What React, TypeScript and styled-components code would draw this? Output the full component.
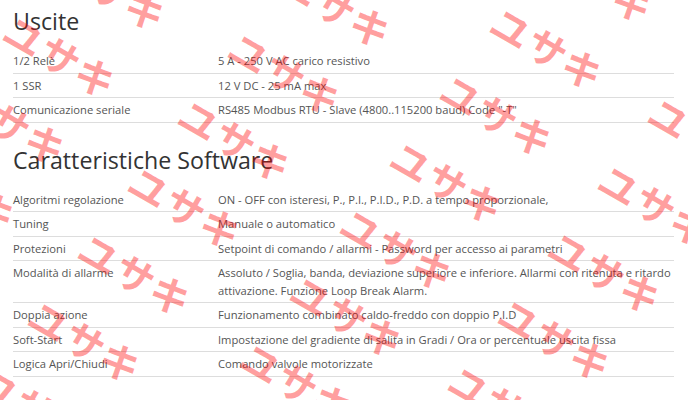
import * as React from 'react';
import styled, { createGlobalStyle } from 'styled-components';

const GlobalStyle = createGlobalStyle`
  html, body {
    margin: 0;
    padding: 0;
    background: #fff;
  }

  body {
    font-family: 'Open Sans', 'Liberation Sans', sans-serif;
    overflow: hidden;
  }
`;

const Page = styled.div`
  position: relative;
  width: 688px;
  height: 400px;
  box-sizing: border-box;
  padding: 8px 14px 0 13px;
  overflow: hidden;
`;

const Title = styled.h2<{ $gap?: number }>`
  margin: ${(p) => p.$gap ?? 0}px 0 15px;
  font-size: 23.2px;
  line-height: 26px;
  font-weight: 400;
  color: #333;
`;

const Table = styled.div`
  display: flex;
  flex-direction: column;
`;

const Row = styled.div`
  display: grid;
  grid-template-columns: 205px 1fr;
  border-bottom: 1px solid #ddd;
  font-size: 11.2px;
  line-height: 17.5px;
  color: #555;
`;

const Cell = styled.div`
  padding: 3px 0;
`;

const Watermark = styled.div`
  position: absolute;
  inset: 0;
  pointer-events: none;
  overflow: hidden;
`;

type MarkProps = { $x: number; $y: number };

const Mark = styled.span.attrs<MarkProps>((p) => ({
  style: { left: `${p.$x - 20}px`, top: `${p.$y - 20}px` },
}))<MarkProps>`
  position: absolute;
  font-family: 'Noto Sans CJK JP', sans-serif;
  font-size: 40px;
  line-height: 40px;
  font-weight: 700;
  letter-spacing: 1px;
  color: rgba(255, 0, 0, 0.38);
  white-space: nowrap;
  transform-origin: 20px 20px;
  transform: rotate(30deg);
`;

const outputs = [
  ['1/2 Relè', '5 A - 250 V AC carico resistivo'],
  ['1 SSR', '12 V DC - 25 mA max'],
  ['Comunicazione seriale', 'RS485 Modbus RTU - Slave (4800..115200 baud) Code "-T"'],
];

const software = [
  ['Algoritmi regolazione', 'ON - OFF con isteresi, P., P.I., P.I.D., P.D. a tempo proporzionale,'],
  ['Tuning', 'Manuale o automatico'],
  ['Protezioni', 'Setpoint di comando / allarmi - Password per accesso ai parametri'],
  [
    'Modalità di allarme',
    'Assoluto / Soglia, banda, deviazione superiore e inferiore. Allarmi con ritenuta e ritardo attivazione. Funzione Loop Break Alarm.',
  ],
  ['Doppia azione', 'Funzionamento combinato caldo-freddo con doppio P.I.D'],
  ['Soft-Start', 'Impostazione del gradiente di salita in Gradi / Ora or percentuale uscita fissa'],
  ['Logica Apri/Chiudi', 'Comando valvole motorizzate'],
];

// watermark chains, each one steps down-left by STEP
const STEP = { x: -50, y: 67 };
const chains = [
  { x: 25, y: 35, from: -1, to: 2 },
  { x: 250, y: 52, from: -1, to: 5 },
  { x: 512, y: 27, from: -1, to: 5 },
  { x: 670, y: 117, from: 0, to: 4 },
];

const marks: MarkProps[] = chains.flatMap((c) => {
  const list: MarkProps[] = [];
  for (let k = c.from; k <= c.to; k++) {
    list.push({ $x: c.x + k * STEP.x, $y: c.y + k * STEP.y });
  }
  return list;
});

const SpecTable = ({ rows }: { rows: string[][] }) => (
  <Table>
    {rows.map(([label, value]) => (
      <Row key={label}>
        <Cell>{label}</Cell>
        <Cell>{value}</Cell>
      </Row>
    ))}
  </Table>
);

export default function App() {
  return (
    <Page>
      <GlobalStyle />
      <Title>Uscite</Title>
      <SpecTable rows={outputs} />
      <Title $gap={24}>Caratteristiche Software</Title>
      <SpecTable rows={software} />
      <Watermark>
        {marks.map((m, i) => (
          <Mark key={i} $x={m.$x} $y={m.$y}>
            ユサキ
          </Mark>
        ))}
      </Watermark>
    </Page>
  );
}
